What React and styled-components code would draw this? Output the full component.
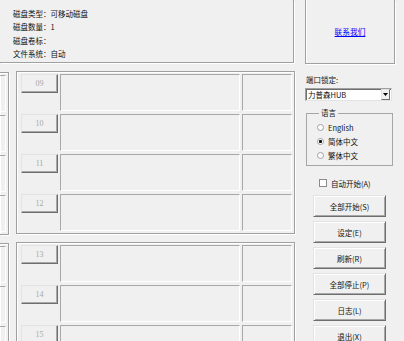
import React from 'react';
import styled, { createGlobalStyle } from 'styled-components';

const Global = createGlobalStyle`
  html, body { margin: 0; padding: 0; background: #f0f0f0; }
  body { font-family: "Noto Sans CJK SC", "Noto Sans", sans-serif; }
`;

const Window = styled.div`
  width: 404px;
  height: 341px;
  overflow: hidden;
  background: #f0f0f0;
  display: flex;
  align-items: flex-start;
  gap: 9px;
  font-family: "Noto Sans CJK SC", "Noto Sans", sans-serif;
  font-size: 7.5px;
  color: #111;
`;

const LeftArea = styled.div`
  width: 296px;
  flex-shrink: 0;
  display: flex;
  flex-direction: column;
`;

const InfoBox = styled.div`
  box-sizing: border-box;
  width: 294px;
  height: 63px;
  border-right: 1px solid #a0a0a0;
  border-bottom: 1px solid #a0a0a0;
  box-shadow: 1px 1px 0 #fff;
  padding: 7px 0 0 13px;
`;

const InfoLine = styled.div`
  height: 13.3px;
  line-height: 13.3px;
  white-space: nowrap;
`;

const PanelsRow = styled.div`
  display: flex;
  align-items: flex-start;
  margin-top: 8px;
`;

const Column = styled.div`
  display: flex;
  flex-direction: column;
  gap: 8px;
  margin-left: ${p => p.$ml || 0}px;
  margin-top: ${p => p.$mt || 0}px;
`;

const Panel = styled.div`
  box-sizing: border-box;
  width: ${p => p.$w}px;
  border: 1px solid #a0a0a0;
  ${p => (p.$open ? 'border-left: none;' : '')}
  box-shadow: inset 1px 1px 0 #fff, 1px 1px 0 #fff;
  padding: 2px 2px 2px ${p => (p.$open ? 0 : 4)}px;
  display: flex;
  flex-direction: column;
  gap: 3px;
  overflow: hidden;
`;

const Row = styled.div`
  display: flex;
  gap: 2px;
  height: 37px;
  flex-shrink: 0;
  justify-content: ${p => (p.$end ? 'flex-end' : 'flex-start')};
`;

const NumButton = styled.div`
  box-sizing: border-box;
  width: 37px;
  height: 19px;
  flex-shrink: 0;
  border: 1px solid;
  border-color: #e3e3e3 #6e6e6e #6e6e6e #e3e3e3;
  box-shadow: inset -1px -1px 0 #a8a8a8;
  display: flex;
  align-items: center;
  justify-content: center;
  font-family: "Liberation Serif", serif;
  font-size: 8px;
  color: #a8a8a8;
`;

const Box = styled.div`
  box-sizing: border-box;
  height: 37px;
  flex-shrink: 0;
  ${p => (p.$w ? `width: ${p.$w}px;` : 'flex: 1;')}
  border: 1px solid;
  border-color: #a8a8a8 #fff #fff #a8a8a8;
`;

const RightArea = styled.div`
  width: 90px;
  flex-shrink: 0;
  display: flex;
  flex-direction: column;
`;

const LinkBox = styled.div`
  box-sizing: border-box;
  width: 90px;
  height: 64px;
  border: 1px solid #a0a0a0;
  border-top: none;
  box-shadow: inset 1px 0 0 #fff, 1px 1px 0 #fff;
  display: flex;
  align-items: center;
  justify-content: center;
`;

const Link = styled.a`
  color: #0000ff;
  text-decoration: underline;
  font-size: 7.7px;
  cursor: pointer;
`;

const Label = styled.div`
  margin-top: 11px;
  padding-left: 1px;
  height: 10px;
  line-height: 10px;
`;

const Select = styled.div`
  box-sizing: border-box;
  width: 87px;
  height: 13px;
  margin-top: 3px;
  background: #fff;
  border: 1px solid;
  border-color: #a0a0a0 #e3e3e3 #e3e3e3 #a0a0a0;
  box-shadow: inset 1px 1px 0 #6e6e6e;
  display: flex;
  align-items: center;
`;

const SelectText = styled.span`
  flex: 1;
  padding-left: 2px;
  line-height: 11px;
  white-space: nowrap;
`;

const ArrowButton = styled.span`
  box-sizing: border-box;
  width: 9px;
  height: 11px;
  margin: 0 1px 0 0;
  background: #f0f0f0;
  border: 1px solid;
  border-color: #e3e3e3 #6e6e6e #6e6e6e #e3e3e3;
  display: flex;
  align-items: center;
  justify-content: center;
`;

const Group = styled.fieldset`
  box-sizing: border-box;
  width: 87px;
  margin: 7px 0 0 1px;
  padding: 2px 0 3px 10px;
  min-width: 0;
  border: 1px solid #a6a6a6;
`;

const Legend = styled.legend`
  margin-left: 2px;
  padding: 0 2px;
  height: 10px;
  line-height: 10px;
  font-size: 7.5px;
`;

const RadioRow = styled.label`
  display: flex;
  align-items: center;
  gap: 4px;
  height: 14px;
  white-space: nowrap;
`;

const RadioDot = styled.span`
  box-sizing: border-box;
  width: 7px;
  height: 7px;
  border-radius: 50%;
  border: 1px solid #a0a0a0;
  background: ${p => (p.$on ? 'radial-gradient(circle, #111 0 1.3px, #fff 1.8px)' : '#fff')};
  flex-shrink: 0;
`;

const CheckRow = styled.label`
  display: flex;
  align-items: center;
  gap: 4px;
  height: 10px;
  margin: 12px 0 0 14px;
  white-space: nowrap;
`;

const CheckBox = styled.span`
  box-sizing: border-box;
  width: 8px;
  height: 8px;
  background: #fff;
  border: 1px solid #8c8c8c;
  flex-shrink: 0;
`;

const ButtonList = styled.div`
  display: flex;
  flex-direction: column;
  gap: 4px;
  margin: 7px 0 0 8px;
`;

const ActionButton = styled.div`
  box-sizing: border-box;
  width: 73px;
  height: 22px;
  flex-shrink: 0;
  border: 1px solid;
  border-color: #e3e3e3 #6e6e6e #6e6e6e #e3e3e3;
  box-shadow: inset 1px 1px 0 #fff, inset -1px -1px 0 #a8a8a8;
  display: flex;
  align-items: center;
  justify-content: center;
  white-space: nowrap;
`;

const info = ['磁盘类型：可移动磁盘', '磁盘数量：1', '磁盘卷标：', '文件系统：自动'];
const panelA = ['09', '10', '11', '12'];
const panelB = ['13', '14', '15', '16'];
const actions = ['全部开始(S)', '设定(E)', '刷新(R)', '全部停止(P)', '日志(L)', '退出(X)'];

function StubPanel() {
  return (
    <Panel $w={9} $open>
      {[0, 1, 2, 3].map(i => (
        <Row key={i} $end>
          <Box $w={60} />
        </Row>
      ))}
    </Panel>
  );
}

function SlotPanel({ nums }) {
  return (
    <Panel $w={279}>
      {nums.map(n => (
        <Row key={n}>
          <NumButton>{n}</NumButton>
          <Box $w={180} />
          <Box />
        </Row>
      ))}
    </Panel>
  );
}

export default function App() {
  return (
    <>
      <Global />
      <Window>
        <LeftArea>
          <InfoBox>
            {info.map(t => (
              <InfoLine key={t}>{t}</InfoLine>
            ))}
          </InfoBox>
          <PanelsRow>
            <Column $mt={1}>
              <StubPanel />
              <StubPanel />
            </Column>
            <Column $ml={7}>
              <SlotPanel nums={panelA} />
              <SlotPanel nums={panelB} />
            </Column>
          </PanelsRow>
        </LeftArea>
        <RightArea>
          <LinkBox>
            <Link>联系我们</Link>
          </LinkBox>
          <Label>端口锁定:</Label>
          <Select>
            <SelectText>力普森HUB</SelectText>
            <ArrowButton>
              <svg width="5" height="3" viewBox="0 0 5 3">
                <path d="M0 0 H5 L2.5 3 Z" fill="#000" />
              </svg>
            </ArrowButton>
          </Select>
          <Group>
            <Legend>语言</Legend>
            <RadioRow>
              <RadioDot />
              English
            </RadioRow>
            <RadioRow>
              <RadioDot $on />
              简体中文
            </RadioRow>
            <RadioRow>
              <RadioDot />
              繁体中文
            </RadioRow>
          </Group>
          <CheckRow>
            <CheckBox />
            自动开始(A)
          </CheckRow>
          <ButtonList>
            {actions.map(a => (
              <ActionButton key={a}>{a}</ActionButton>
            ))}
          </ButtonList>
        </RightArea>
      </Window>
    </>
  );
}
